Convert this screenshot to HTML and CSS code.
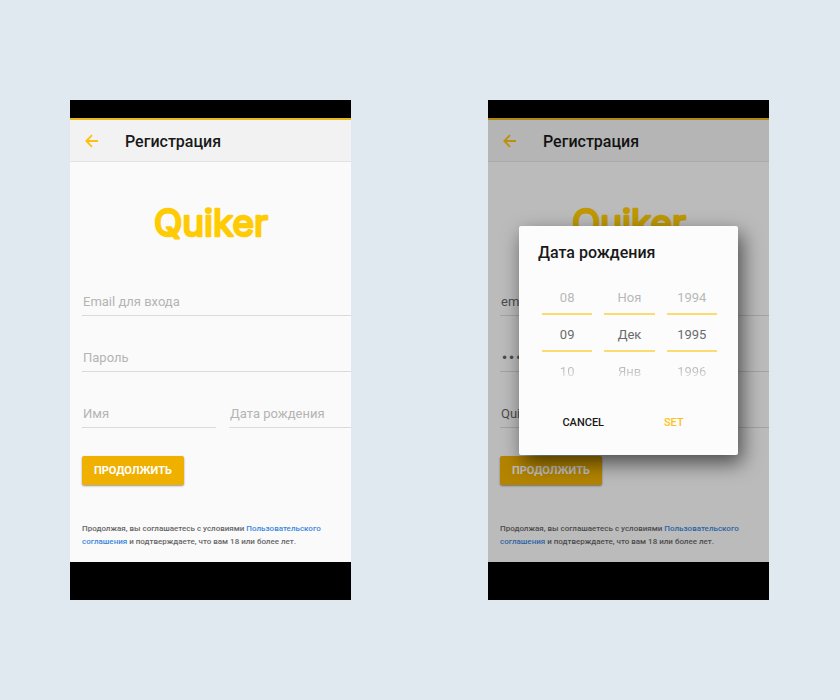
FILE: index.html
```html
<!DOCTYPE html>
<html lang="ru">
<head>
  <meta charset="utf-8">
  <meta name="viewport" content="width=device-width, initial-scale=1">
  <title>Quiker — Регистрация</title>
  <link rel="stylesheet" href="styles.css">
</head>
<body>
  <main class="stage">
    <section class="phone">
      <div class="screen">
        <header class="bar">
          <button class="back" type="button" aria-label="Назад">
            <svg viewBox="0 0 14 14" width="14" height="14" aria-hidden="true"><path d="M13 7H2M7 1.200L1.300 7L7 12.800" /></svg>
          </button>
          <h1 class="bar-title">Регистрация</h1>
        </header>
        <svg class="logo" viewBox="0 0 140 54" width="140" height="54" role="img" aria-label="Quiker"><text x="70" y="38">Quiker</text></svg>
        <form class="form">
          <input class="field wide" type="email" placeholder="Email для входа" aria-label="Email для входа">
          <input class="field wide" type="password" placeholder="Пароль" aria-label="Пароль">
          <input class="field" type="text" placeholder="Имя" aria-label="Имя">
          <input class="field" type="text" placeholder="Дата рождения" aria-label="Дата рождения">
          <button class="submit" type="button">ПРОДОЛЖИТЬ</button>
        </form>
        <p class="terms">Продолжая, вы соглашаетесь с условиями <a href="#terms">Пользовательского соглашения</a> и подтверждаете, что вам 18 или более лет.</p>
      </div>
    </section>

    <section class="phone">
      <div class="screen">
        <header class="bar">
          <button class="back" type="button" aria-label="Назад">
            <svg viewBox="0 0 14 14" width="14" height="14" aria-hidden="true"><path d="M13 7H2M7 1.200L1.300 7L7 12.800" /></svg>
          </button>
          <h2 class="bar-title">Регистрация</h2>
        </header>
        <svg class="logo" viewBox="0 0 140 54" width="140" height="54" role="img" aria-label="Quiker"><text x="70" y="38">Quiker</text></svg>
        <form class="form">
          <input class="field wide" type="email" value="email" aria-label="Email для входа">
          <input class="field wide secret" type="password" value="quiker" aria-label="Пароль">
          <input class="field" type="text" value="Quiker" aria-label="Имя">
          <input class="field" type="text" aria-label="Дата рождения">
          <button class="submit" type="button">ПРОДОЛЖИТЬ</button>
        </form>
        <p class="terms">Продолжая, вы соглашаетесь с условиями <a href="#terms">Пользовательского соглашения</a> и подтверждаете, что вам 18 или более лет.</p>

        <div class="scrim">
          <div class="dialog" role="dialog" aria-labelledby="dialog-title">
            <h3 class="dialog-title" id="dialog-title">Дата рождения</h3>
            <div class="pickers">
              <div class="picker">
                <button class="step" type="button">08</button>
                <input class="current" type="text" value="09" aria-label="День">
                <button class="step next" type="button">10</button>
              </div>
              <div class="picker">
                <button class="step" type="button">Ноя</button>
                <input class="current" type="text" value="Дек" aria-label="Месяц">
                <button class="step next" type="button">Янв</button>
              </div>
              <div class="picker">
                <button class="step" type="button">1994</button>
                <input class="current" type="text" value="1995" aria-label="Год">
                <button class="step next" type="button">1996</button>
              </div>
            </div>
            <div class="actions">
              <button class="action" type="button">CANCEL</button>
              <button class="action confirm" type="button">SET</button>
            </div>
          </div>
        </div>
      </div>
    </section>
  </main>
</body>
</html>
```
FILE: styles.css
```css
* {
  box-sizing: border-box;
}

body {
  margin: 0;
  background: #e0e9ef;
  font-family: Roboto, "Liberation Sans", sans-serif;
  color: #191919;
}

button,
input {
  margin: 0;
  padding: 0;
  border: 0;
  border-radius: 0;
  outline: 0;
  background: none;
  font: inherit;
  color: inherit;
}

.stage {
  display: grid;
  grid-template-columns: 1fr 1fr;
  gap: 137px;
  padding: 100px 71px 100px 70px;
}

.phone {
  padding: 18px 0 38px;
  background: #000;
}

.screen {
  position: relative;
  display: flex;
  flex-direction: column;
  overflow: hidden;
  background: #fafafa;
}

.bar {
  display: flex;
  align-items: center;
  gap: 26px;
  height: 44px;
  padding-left: 15px;
  background: #f2f2f2;
  border-top: 2px solid #e9b81c;
  border-bottom: 1px solid #e2e2e2;
}

.back {
  display: flex;
  width: 14px;
  height: 14px;
}

.back svg {
  fill: none;
  stroke: #fcc010;
  stroke-width: 1.8;
}

.bar-title {
  margin: 0;
  padding-top: 2px;
  font-size: 16px;
  line-height: 20px;
  font-weight: 500;
}

.logo {
  align-self: center;
  margin-top: 36px;
}

.logo text {
  font-family: Inter, "Liberation Sans", sans-serif;
  font-size: 37px;
  font-weight: 400;
  text-anchor: middle;
  fill: #ffcb05;
  stroke: #ffcb05;
  stroke-width: 2.5;
  stroke-linejoin: round;
}

.form {
  display: grid;
  grid-template-columns: 134px 1fr;
  column-gap: 13px;
  row-gap: 28px;
  margin-top: 36px;
  padding-left: 12px;
}

.field {
  width: 100%;
  height: 28px;
  padding-left: 1px;
  border-bottom: 1px solid #dadada;
  font-size: 13px;
  color: #666;
}

.field::placeholder {
  color: #b4b4b4;
  opacity: 1;
}

.wide {
  grid-column: 1 / -1;
}

.secret {
  font-family: "DejaVu Sans", sans-serif;
  font-size: 12px;
}

.submit {
  justify-self: start;
  height: 29px;
  padding: 0 12px;
  border-radius: 2px;
  background: #efb000;
  box-shadow: 0 1px 2px rgba(0, 0, 0, 0.4);
  font-size: 11px;
  font-weight: 700;
  color: #fff;
}

.terms {
  margin: 0;
  padding: 37px 12px 14px;
  font-size: 8px;
  line-height: 13px;
  font-weight: 500;
  color: #666;
}

.terms a {
  color: #3b87dc;
  text-decoration: none;
}

.scrim {
  position: absolute;
  inset: 0;
  display: grid;
  align-items: center;
  padding: 0 31px;
  background: rgba(0, 0, 0, 0.25);
}

.dialog {
  padding: 17px 19px 21px;
  border-radius: 2px;
  background: #fcfcfc;
  box-shadow: 4px 8px 20px rgba(0, 0, 0, 0.6);
}

.dialog-title {
  margin: 0;
  font-size: 16px;
  line-height: 20px;
  font-weight: 500;
}

.pickers {
  display: grid;
  grid-template-columns: repeat(3, 1fr);
  gap: 12px;
  margin-top: 15px;
  padding: 0 2px 0 4px;
}

.picker {
  display: grid;
  grid-template-rows: 35px 39px 40px;
}

.step {
  padding-top: 4px;
  font-size: 13px;
  color: #b8b8b8;
}

.next {
  padding-top: 0;
  background: linear-gradient(#bbb 45%, #f0f0f0 70%);
  background-clip: text;
  color: transparent;
}

.current {
  width: 100%;
  padding-top: 4px;
  border-top: 2px solid #fbdc70;
  border-bottom: 2px solid #fbdc70;
  font-size: 13px;
  text-align: center;
  color: #6b6b6b;
}

.actions {
  display: grid;
  grid-template-columns: 1fr 1fr;
  margin-top: 20px;
}

.action {
  height: 22px;
  font-size: 11px;
  font-weight: 500;
}

.confirm {
  color: #fcc21b;
}
```
